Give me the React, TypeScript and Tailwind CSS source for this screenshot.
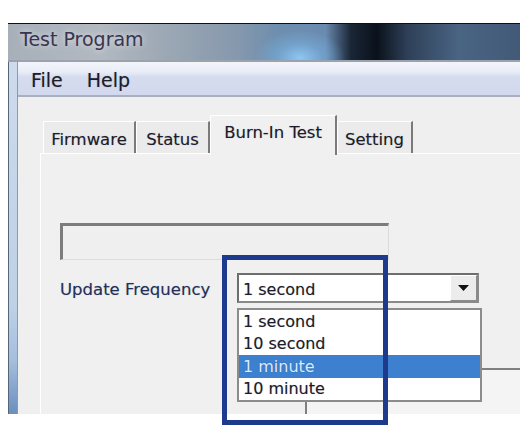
import React from 'react';

const TABS = [
  { label: 'Firmware', w: 'w-[93px]' },
  { label: 'Status', w: 'w-[74px]' },
  { label: 'Burn-In Test', w: 'w-[127px]', active: true },
  { label: 'Setting', w: 'w-[76px]' },
];

const OPTIONS = ['1 second', '10 second', '1 minute', '10 minute'];

const Tab = ({ label, w, active }: { label: string; w: string; active?: boolean }) =>
  active ? (
    <div
      className={`${w} h-[40px] -mb-[2px] z-10 relative flex items-start justify-center pt-[5px] bg-[#f0f0f0] border-l border-t border-white border-r-2 border-r-[#7a7a7a] rounded-tl-[2px] text-[16.5px] text-[#1c1c2a]`}
    >
      {label}
    </div>
  ) : (
    <div
      className={`${w} h-[32px] flex items-start justify-center pt-[6px] bg-[#ebebeb] border-l border-t border-white border-r-2 border-r-[#7a7a7a] rounded-tl-[2px] text-[16.5px] text-[#1c1c2a]`}
    >
      {label}
    </div>
  );

export default function App() {
  return (
    <div
      className="relative w-[532px] h-[431px] bg-white overflow-hidden [text-shadow:0_0_1px_rgba(0,0,40,0.3)]"
      style={{ fontFamily: '"DejaVu Sans", Verdana, sans-serif' }}
    >
      {/* window */}
      <div className="absolute left-[8px] top-[23px] w-[512px] h-[391px] flex flex-col overflow-hidden">
        {/* title bar */}
        <div className="h-[39px] shrink-0 flex items-center pl-[12px] pb-[6px] border-t border-[#101010] border-b-2 border-b-[#9aa3ad] bg-[radial-gradient(ellipse_45px_28px_at_292px_34px,#8fc6f2_0%,rgba(120,180,230,0.5)_50%,transparent_100%),linear-gradient(90deg,#a7afb9_0%,#b2b9c1_18%,#9aa6b3_32%,#8598ad_45%,#6f8fae_52%,#6a8bb0_62%,#1a2636_67%,#0a111b_72%,#2e4058_78%,#4a6483_88%,#425a78_100%)]">
          <span className="text-[19px] text-[#3a3450] [text-shadow:0_0_6px_rgba(255,255,255,0.7)]">
            Test Program
          </span>
        </div>

        <div className="flex flex-1 min-h-0">
          {/* left frame */}
          <div className="w-[10px] shrink-0 border-l border-[#56657a] border-r border-r-[#8c9aac] bg-[linear-gradient(180deg,#cddbec_0%,#bdd0e6_70%,#a4bedc_85%,#6a8ebe_100%)]" />

          {/* client */}
          <div className="flex-1 flex flex-col min-w-0">
            {/* menu bar */}
            <div className="h-[35px] shrink-0 flex items-center gap-[24px] px-[13px] pt-[3px] border-b-2 border-[#a9afbd] bg-[linear-gradient(180deg,#f3f5fb_0%,#e9edf7_30%,#d5dcef_45%,#d2d9ee_100%)] text-[19px] text-[#1c1c2a]">
              <span>File</span>
              <span>Help</span>
            </div>

            {/* content */}
            <div className="flex-1 flex flex-col bg-[#efefef] pl-[22px] pt-[18px] min-h-0">
              {/* tabs */}
              <div className="flex items-end h-[38px] pl-[3px] shrink-0">
                {TABS.map((t) => (
                  <Tab key={t.label} {...t} />
                ))}
              </div>

              {/* tab panel */}
              <div className="flex-1 flex flex-col border-l border-t border-white bg-[#f0f0f0] pl-[19px] pt-[69px] min-h-0">
                <div className="w-[329px] h-[37px] shrink-0 border-t-[3px] border-l-[3px] border-[#7c7c7c] border-b border-r border-b-[#dcdcdc] border-r-[#dcdcdc] bg-[#efefef]" />

                <div className="flex items-center mt-[13px] shrink-0">
                  <div className="w-[177px] text-[16.5px] text-[#24305a] pt-[5px]">Update Frequency</div>
                  <div className="relative">
                    <div className="w-[242px] h-[30px] flex items-center border-2 border-[#8a8a8a] border-t-[#6e6e6e] border-l-[#6e6e6e] bg-white">
                      <span className="flex-1 pl-[4px] pt-[3px] text-[16px] text-[#1c1c2a]">1 second</span>
                      <div className="w-[27px] h-[26px] flex items-center justify-center bg-[#ececec] border-l border-t border-white border-r border-b border-r-[#8a8a8a] border-b-[#8a8a8a]">
                        <svg width="11" height="6" viewBox="0 0 11 6">
                          <path d="M0 0H11L5.5 6Z" fill="#111" />
                        </svg>
                      </div>
                    </div>
                    {/* open dropdown list */}
                    <div className="absolute left-0 top-[35px] z-20 w-[245px] h-[94px] border-2 border-[#8c8c8c] bg-white flex flex-col">
                      {OPTIONS.map((o) => (
                        <div
                          key={o}
                          className={`h-[22.5px] flex items-center pl-[4px] pt-[1px] text-[16px] ${
                            o === '1 minute' ? 'bg-[#3c80cf] text-[#dcecff]' : 'text-[#1c1c2a]'
                          }`}
                        >
                          {o}
                        </div>
                      ))}
                    </div>
                  </div>
                </div>

                {/* group box behind the list */}
                <div className="flex-1 ml-[245px] mt-[65px] border-t-2 border-l-2 border-[#7f7f7f] bg-[#f4f4f4]" />
              </div>
            </div>
          </div>
        </div>
      </div>

      {/* highlight annotation */}
      <div className="absolute left-[222px] top-[255px] w-[166px] h-[170px] border-[5px] border-[#1d3a8c] z-30" />
    </div>
  );
}
